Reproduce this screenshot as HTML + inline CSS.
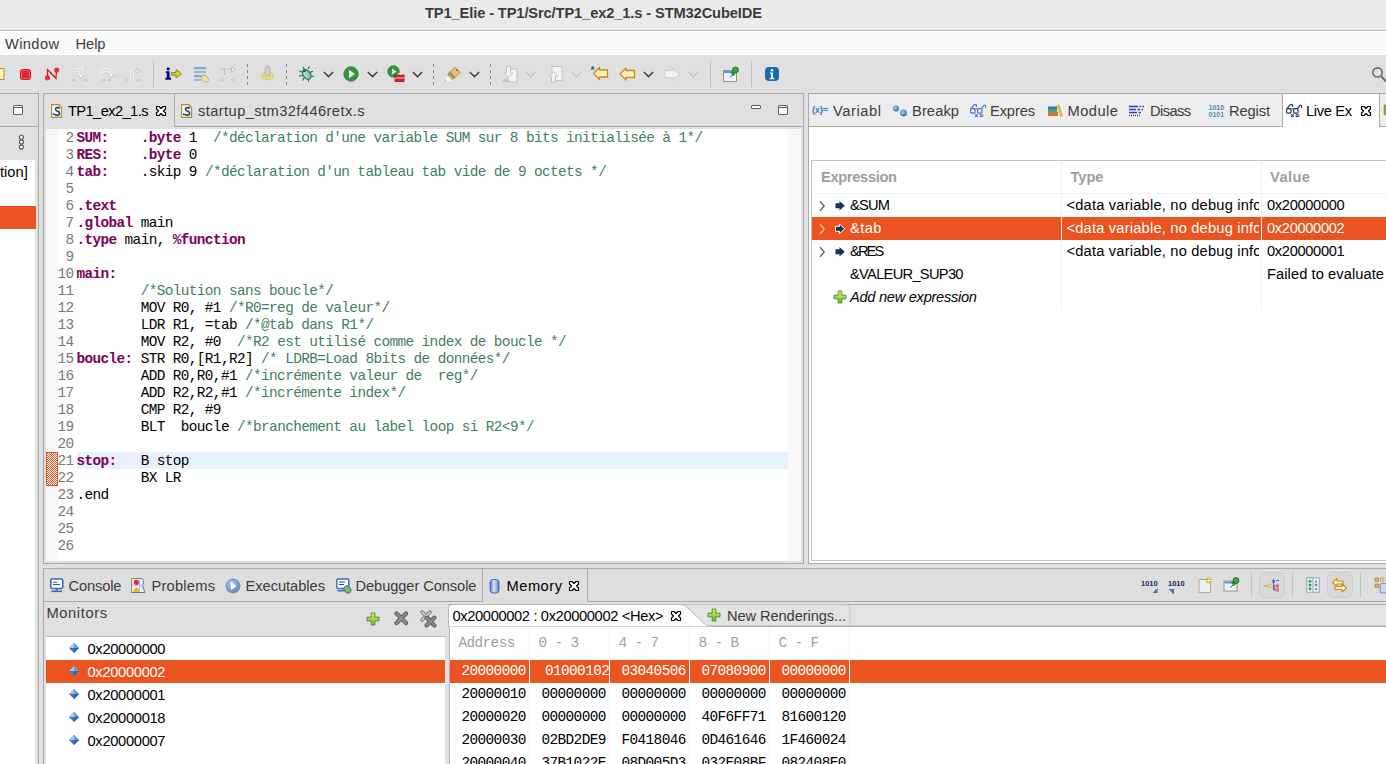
<!DOCTYPE html>
<html><head><meta charset="utf-8"><style>
html,body{margin:0;padding:0;width:1386px;height:764px;overflow:hidden;background:#e0e0e0;position:relative}
div,span,svg{position:absolute;box-sizing:border-box}
.t{white-space:pre}

</style></head><body>
<div style='left:0px;top:0px;width:1386px;height:30px;background:#ebebeb;'></div>
<div style='left:0px;top:30px;width:1386px;height:1px;background:#c2c2c2;'></div>
<div style='left:0px;top:31px;width:1386px;height:1px;background:#ffffff;'></div>
<div style='left:0px;top:32px;width:1386px;height:22px;background:#fafafa;'></div>
<div style='left:0px;top:54px;width:1386px;height:1px;background:#ffffff;'></div>
<div style='left:0px;top:93px;width:39px;height:1px;background:#a9a9a9;'></div>
<div style='left:38px;top:93px;width:1px;height:671px;background:#a9a9a9;'></div>
<div style='left:0px;top:126px;width:38px;height:1px;background:#a9a9a9;'></div>
<div style='left:0px;top:160px;width:35px;height:604px;background:#ffffff;'></div>
<div style='left:0px;top:206px;width:36px;height:23px;background:#e95420;'></div>
<div style='left:43px;top:93px;width:761px;height:471px;border:1px solid #a9a9a9;'></div>
<div style='left:174px;top:94px;width:1px;height:33px;background:#a9a9a9;'></div>
<div style='left:174px;top:126px;width:629px;height:1px;background:#a9a9a9;'></div>
<div style='left:46px;top:129px;width:742px;height:432px;background:#ffffff;'></div>
<div style='left:46px;top:129px;width:12px;height:432px;background:#f8f8f8;'></div>
<div style='left:788px;top:129px;width:13px;height:432px;background:#f8f8f8;'></div>
<div style='left:77px;top:452px;width:711px;height:17px;background:#e8f2fe;'></div>
<div style='left:808px;top:93px;width:600px;height:471px;border:1px solid #a9a9a9;'></div>
<div style='left:809px;top:94px;width:577px;height:32px;background:#ededed;'></div>
<div style='left:809px;top:126px;width:473px;height:1px;background:#a9a9a9;'></div>
<div style='left:1282px;top:94px;width:98px;height:33px;background:#fff;border-left:1px solid #a9a9a9;border-right:1px solid #a9a9a9;'></div>
<div style='left:1380px;top:126px;width:6px;height:1px;background:#a9a9a9;'></div>
<div style='left:809px;top:127px;width:577px;height:436px;background:#ffffff;'></div>
<div style='left:811px;top:160px;width:600px;height:401px;border:1px solid #c4c4c4;'></div>
<div style='left:812px;top:193px;width:574px;height:1px;background:#f2f2f2;'></div>
<div style='left:1061px;top:161px;width:1px;height:148px;background:#f3f3f3;'></div>
<div style='left:1261px;top:161px;width:1px;height:148px;background:#f3f3f3;'></div>
<div style='left:812px;top:217px;width:574px;height:23px;background:#e95420;'></div>
<div style='left:1061px;top:217px;width:1px;height:23px;background:#ffffff;'></div>
<div style='left:1261px;top:217px;width:1px;height:23px;background:#ffffff;'></div>
<div style='left:43px;top:568px;width:1400px;height:300px;border:1px solid #a9a9a9;background:#dedede;'></div>
<div style='left:44px;top:601px;width:438px;height:1px;background:#a9a9a9;'></div>
<div style='left:482px;top:569px;width:1px;height:33px;background:#a9a9a9;'></div>
<div style='left:587px;top:569px;width:1px;height:33px;background:#a9a9a9;'></div>
<div style='left:587px;top:601px;width:799px;height:1px;background:#a9a9a9;'></div>
<div style='left:44px;top:602px;width:1342px;height:162px;background:#e0e0e0;'></div>
<div style='left:46px;top:636px;width:400px;height:1px;background:#b9b9b9;'></div>
<div style='left:46px;top:637px;width:399px;height:127px;background:#ffffff;'></div>
<div style='left:46px;top:660px;width:399px;height:23px;background:#e95420;'></div>
<div style='left:448px;top:604px;width:938px;height:1px;background:#acacac;'></div>
<div style='left:448px;top:605px;width:938px;height:20px;background:#e3e3e3;'></div>
<div style='left:448px;top:625px;width:938px;height:1px;background:#cdcdcd;'></div>
<div style='left:448px;top:626px;width:938px;height:1px;background:#acacac;'></div>
<div style='left:449px;top:627px;width:937px;height:137px;background:#ffffff;'></div>
<div style='left:449px;top:626px;width:1px;height:138px;background:#b9b9b9;'></div>
<div style='left:450px;top:660px;width:936px;height:23px;background:#e95420;'></div>
<div style='left:529px;top:627px;width:1px;height:137px;background:#f4f4f4;'></div>
<div style='left:529px;top:660px;width:1px;height:23px;background:#ffffff;'></div>
<div style='left:609px;top:627px;width:1px;height:137px;background:#f4f4f4;'></div>
<div style='left:609px;top:660px;width:1px;height:23px;background:#ffffff;'></div>
<div style='left:689px;top:627px;width:1px;height:137px;background:#f4f4f4;'></div>
<div style='left:689px;top:660px;width:1px;height:23px;background:#ffffff;'></div>
<div style='left:769px;top:627px;width:1px;height:137px;background:#f4f4f4;'></div>
<div style='left:769px;top:660px;width:1px;height:23px;background:#ffffff;'></div>
<div style='left:849px;top:627px;width:1px;height:137px;background:#f4f4f4;'></div>
<div style='left:849px;top:660px;width:1px;height:23px;background:#ffffff;'></div>
<div style='left:153px;top:61px;width:1px;height:26px;background:#bdbdbd;'></div>
<div style='left:247px;top:64px;width:1px;height:2.5px;background:#8f8a74;'></div>
<div style='left:247px;top:70px;width:1px;height:2.5px;background:#8f8a74;'></div>
<div style='left:247px;top:76px;width:1px;height:2.5px;background:#8f8a74;'></div>
<div style='left:247px;top:82px;width:1px;height:2.5px;background:#8f8a74;'></div>
<div style='left:286px;top:64px;width:1px;height:2.5px;background:#8f8a74;'></div>
<div style='left:286px;top:70px;width:1px;height:2.5px;background:#8f8a74;'></div>
<div style='left:286px;top:76px;width:1px;height:2.5px;background:#8f8a74;'></div>
<div style='left:286px;top:82px;width:1px;height:2.5px;background:#8f8a74;'></div>
<div style='left:433px;top:64px;width:1px;height:2.5px;background:#8f8a74;'></div>
<div style='left:433px;top:70px;width:1px;height:2.5px;background:#8f8a74;'></div>
<div style='left:433px;top:76px;width:1px;height:2.5px;background:#8f8a74;'></div>
<div style='left:433px;top:82px;width:1px;height:2.5px;background:#8f8a74;'></div>
<div style='left:490px;top:64px;width:1px;height:2.5px;background:#8f8a74;'></div>
<div style='left:490px;top:70px;width:1px;height:2.5px;background:#8f8a74;'></div>
<div style='left:490px;top:76px;width:1px;height:2.5px;background:#8f8a74;'></div>
<div style='left:490px;top:82px;width:1px;height:2.5px;background:#8f8a74;'></div>
<div style='left:710px;top:61px;width:1px;height:26px;background:#bdbdbd;'></div>
<div style='left:751px;top:61px;width:1px;height:26px;background:#bdbdbd;'></div>
<div style='left:751px;top:105px;width:10px;height:4px;border:1px solid #5e5e5e;background:#fff;border-radius:1px;'></div>
<div style='left:778px;top:105px;width:10px;height:10px;border:1px solid #5e5e5e;background:#fff;border-radius:1px;'></div>
<div style='left:779px;top:107px;width:8px;height:1px;background:#5e5e5e;'></div>
<div style='left:13px;top:105px;width:10px;height:10px;border:1px solid #5e5e5e;background:#fff;border-radius:1px;'></div>
<div style='left:14px;top:107px;width:8px;height:1px;background:#5e5e5e;'></div>
<div style='left:1251px;top:572px;width:1px;height:26px;background:#c4c4c4;'></div>
<div style='left:1259px;top:572px;width:26px;height:26px;border:1px solid #cdcdcd;border-radius:6px;background:#d9d9d9;'></div>
<div style='left:1292px;top:572px;width:1px;height:26px;background:#c4c4c4;'></div>
<div style='left:1327px;top:572px;width:26px;height:26px;border:1px solid #cdcdcd;border-radius:6px;background:#d9d9d9;'></div>
<div style='left:1360px;top:572px;width:1px;height:26px;background:#c4c4c4;'></div>
<svg style='left:680px;top:603px' width='175' height='24' viewBox='0 0 175 24'><path d='M2 1.5 H165 Q170 1.5 170 6 V23' fill='none' stroke='#c4c4c4' stroke-width='1'/><path d='M25 23 Q21 23 18 20 L6 7' fill='none' stroke='#c4c4c4'/></svg>
<svg style='left:447px;top:603px' width='270' height='24' viewBox='0 0 270 24'><path d='M1.5 23.5 V6 Q1.5 1.5 6 1.5 H233 Q238 1.5 241 5 L257 20.5 Q260 23.5 266 23.5' fill='#fff' stroke='#b9b9b9' stroke-width='1'/></svg>
<svg style='left:46px;top:452px' width='12' height='34' viewBox='0 0 12 34'><defs><pattern id='hatch' x='0' y='0' width='2' height='2' patternUnits='userSpaceOnUse'><rect width='2' height='2' fill='#e95420'/><rect x='1' y='0' width='1' height='1' fill='#fff'/><rect x='0' y='1' width='1' height='1' fill='#fff'/></pattern></defs><rect x='0' y='0' width='12' height='34' fill='url(#hatch)'/><rect x='0.5' y='0.5' width='11' height='33' fill='none' stroke='#e95420'/></svg>
<svg style='left:0px;top:68px' width='5' height='13' viewBox='0 0 5 13'><rect x='-6' y='0.5' width='10' height='11' fill='#fff0b8' stroke='#b89030'/></svg>
<svg style='left:19px;top:68px' width='13' height='13' viewBox='0 0 13 13'><rect x='1.5' y='1.5' width='10' height='10' rx='2' fill='#e5232f' stroke='#c81c28'/><rect x='2.5' y='2.5' width='8' height='8' rx='1' fill='none' stroke='#f07078' stroke-width='0.8'/></svg>
<svg style='left:44px;top:67px' width='16' height='15' viewBox='0 0 16 15'><path d='M3.5 10 L3.5 2.5 L8 7 M9 8 L12 11.5 L12.5 3.5' fill='none' stroke='#d8202c' stroke-width='1.3'/><path d='M6.5 6.5 L8.5 7.5 M8.5 8.5 L10 9' stroke='#801018' stroke-width='1.2'/><circle cx='3.5' cy='10.8' r='2.6' fill='#e63040'/><circle cx='12.7' cy='3' r='2.6' fill='#e63040'/></svg>
<svg style='left:71px;top:68px' width='17' height='13' viewBox='0 0 17 13'><path d='M3 2 H10 V8' fill='none' stroke='#f8f8f8' stroke-width='3'/><path d='M3 2 H10 V8' fill='none' stroke='#c2c2c2' stroke-width='1'/><path d='M7 7 L10 11 L13 7' fill='#f8f8f8' stroke='#c2c2c2'/><path d='M1 12 H4 M13 12 H16' stroke='#c2c2c2' stroke-width='1.5'/></svg>
<svg style='left:98px;top:68px' width='17' height='13' viewBox='0 0 17 13'><path d='M2 7 Q2 2 7.5 2 Q13 2 13 6' fill='none' stroke='#f8f8f8' stroke-width='3'/><path d='M2 7 Q2 2 7.5 2 Q13 2 13 6' fill='none' stroke='#c2c2c2'/><path d='M10 6 L13 10 L16 6' fill='#f8f8f8' stroke='#c2c2c2'/><path d='M4 12 H7 M10 12 H13' stroke='#c2c2c2' stroke-width='1.5'/></svg>
<svg style='left:125px;top:68px' width='17' height='13' viewBox='0 0 17 13'><path d='M7 12 V5 Q7 3 10 3 H12' fill='none' stroke='#f8f8f8' stroke-width='3'/><path d='M7 12 V5 Q7 3 10 3 H12' fill='none' stroke='#c2c2c2'/><path d='M11 0.5 L15 3 L11 5.5 Z' fill='#f8f8f8' stroke='#c2c2c2'/><path d='M1 12 H3 M12 12 H15' stroke='#c2c2c2' stroke-width='1.5'/></svg>
<svg style='left:165px;top:67px' width='18' height='14' viewBox='0 0 18 14'><circle cx='3.2' cy='1.8' r='1.6' fill='#000080'/><path d='M0.8 4.2 H4.6 V10.8 H6 V12.8 H0.3 V10.8 H1.8 V6 H0.8 Z' fill='#000080'/><path d='M6.5 5.5 H11 V2.5 L16.5 6.8 L11 11 V8.2 H6.5 Z' fill='#d8d820' stroke='#7a6a10' stroke-width='0.8'/></svg>
<svg style='left:193px;top:66px' width='18' height='17' viewBox='0 0 18 17'><rect x='1' y='1' width='12' height='2.2' fill='#7fa8d0'/><rect x='1' y='5' width='12' height='2.2' fill='#9ab8d8'/><rect x='1' y='9' width='12' height='2.2' fill='#7fa8d0'/><rect x='1' y='13' width='7' height='2' fill='#9ab8d8'/><path d='M8 11 Q10 8 13 10 L15 12 Q17 14 14 16 Q11 17 9 14 Z' fill='#f4dcae' stroke='#c8a060' stroke-width='0.8'/></svg>
<svg style='left:219px;top:67px' width='18' height='15' viewBox='0 0 18 15'><path d='M1 2 H10 M5.5 2 V9' fill='none' stroke='#c2c2c2' stroke-width='1.2'/><path d='M10 2 H13' stroke='#c2c2c2'/><path d='M12.5 0 L16 2.5 L12.5 5 Z' fill='#f8f8f8' stroke='#c2c2c2'/><path d='M3 9 L5.5 12 L8 9' fill='#f8f8f8' stroke='#c2c2c2'/><path d='M1 13 H4 M12 13 H15' stroke='#c2c2c2' stroke-width='1.5'/></svg>
<svg style='left:259px;top:65px' width='17' height='18' viewBox='0 0 17 18'><path d='M3 11 Q1.5 9 3.5 8 L6 7.5 Q8 6 11 7.5 L13.5 8 Q15.5 9 14 11 Q15 13.5 12 14 Q9 16 5.5 14 Q2 13.5 3 11Z' fill='#ecd878' stroke='#d8c060' stroke-width='0.6'/><rect x='6' y='1' width='5' height='10' rx='2.5' fill='#cfcfcf' stroke='#a8a8a8' stroke-width='0.8'/></svg>
<svg style='left:298px;top:65px' width='18' height='18' viewBox='0 0 18 18'><defs><linearGradient id='bug' x1='0' y1='0' x2='1' y2='1'><stop offset='0' stop-color='#d8f0d0'/><stop offset='1' stop-color='#68b878'/></linearGradient></defs><path d='M1.5 6 L5 7.5 M1 11 L5 10.5 M4.5 15.5 L6.5 12.5 M10.5 16.5 L10.5 13.5 M16 11.5 L12.5 11 M15 6 L12 7.5 M5 2 L6.5 4.5 M11.5 1.5 L10 4' fill='none' stroke='#1a6a6a' stroke-width='1.2'/><ellipse cx='8.8' cy='9.5' rx='3.6' ry='5.2' transform='rotate(-35 8.8 9.5)' fill='url(#bug)' stroke='#1a6a6a' stroke-width='1.1'/><circle cx='6.5' cy='5.5' r='1.8' fill='#1a6a6a'/></svg>
<svg style='left:323px;top:71px' width='11' height='7' viewBox='0 0 11 7'><path d='M0.8 1 L5.5 5.6 L10.2 1' fill='none' stroke='#404040' stroke-width='1.5'/></svg>
<svg style='left:343px;top:66px' width='16' height='16' viewBox='0 0 16 16'><circle cx='8' cy='8' r='7.2' fill='#2f9a3a' stroke='#1f7a2a' stroke-width='0.8'/><path d='M6 4 L12 8 L6 12 Z' fill='#fff'/></svg>
<svg style='left:367px;top:71px' width='11' height='7' viewBox='0 0 11 7'><path d='M0.8 1 L5.5 5.6 L10.2 1' fill='none' stroke='#404040' stroke-width='1.5'/></svg>
<svg style='left:387px;top:65px' width='18' height='18' viewBox='0 0 18 18'><circle cx='6.5' cy='6.5' r='5.7' fill='#2f9a3a' stroke='#1f7a2a' stroke-width='0.8'/><path d='M5 3.5 L9.5 6.5 L5 9.5 Z' fill='#fff'/><rect x='8' y='10' width='9' height='6.5' fill='#e02020' stroke='#a01010' stroke-width='0.8'/><path d='M11 10 V8.8 H14 V10 M8 13 H17' stroke='#fff' fill='none' stroke-width='0.8'/></svg>
<svg style='left:412px;top:71px' width='11' height='7' viewBox='0 0 11 7'><path d='M0.8 1 L5.5 5.6 L10.2 1' fill='none' stroke='#404040' stroke-width='1.5'/></svg>
<svg style='left:444px;top:66px' width='18' height='16' viewBox='0 0 18 16'><path d='M1.5 14.5 L5 7 L11 1.5 L16.5 6.5 L10 12.5 Z' fill='#f0c060' stroke='#c08020' stroke-width='0.8'/><path d='M3 9.5 L8 14.5 L4.5 15 Q1 15.5 1.5 12 Z' fill='#fffbe0'/><path d='M5 6.5 L10.5 12' stroke='#909090' stroke-width='3'/><circle cx='13' cy='4' r='1' fill='#4a6aa8'/></svg>
<svg style='left:469px;top:71px' width='11' height='7' viewBox='0 0 11 7'><path d='M0.8 1 L5.5 5.6 L10.2 1' fill='none' stroke='#404040' stroke-width='1.5'/></svg>
<svg style='left:502px;top:66px' width='16' height='17' viewBox='0 0 16 17'><rect x='6' y='3' width='9' height='13' fill='#f4f4f4' stroke='#c2c2c2'/><path d='M4.5 0.5 H8.5 V7 H11 L6.5 11.5 L2 7 H4.5 Z' fill='#f4f4f4' stroke='#c2c2c2'/><rect x='1' y='13' width='6' height='3' fill='#c2c2c2'/></svg>
<svg style='left:525px;top:71px' width='11' height='7' viewBox='0 0 11 7'><path d='M0.8 1 L5.5 5.6 L10.2 1' fill='none' stroke='#c8c8c8' stroke-width='1.5'/></svg>
<svg style='left:547px;top:66px' width='16' height='17' viewBox='0 0 16 17'><rect x='5' y='0.5' width='10' height='14' fill='#f4f4f4' stroke='#c2c2c2'/><path d='M4.5 16 V10 H2 L6.5 5.5 L11 10 H8.5 V16 Z' fill='#f4f4f4' stroke='#c2c2c2'/></svg>
<svg style='left:571px;top:71px' width='11' height='7' viewBox='0 0 11 7'><path d='M0.8 1 L5.5 5.6 L10.2 1' fill='none' stroke='#c8c8c8' stroke-width='1.5'/></svg>
<svg style='left:591px;top:66px' width='18' height='15' viewBox='0 0 18 15'><path d='M8.5 4 V1.5 L2.5 7.5 L8.5 13.5 V11 H16.5 V4 Z' fill='#fff0c0' stroke='#c88a10' stroke-width='1.3' stroke-linejoin='round'/><text x='-0.5' y='8' font-family='Liberation Sans' font-weight='700' font-size='10' fill='#2a5a9a'>*</text></svg>
<svg style='left:619px;top:67px' width='17' height='14' viewBox='0 0 17 14'><path d='M7 3.5 V1 L1 7 L7 13 V10.5 H15.5 V3.5 Z' fill='#fff0c0' stroke='#c88a10' stroke-width='1.3' stroke-linejoin='round'/></svg>
<svg style='left:643px;top:71px' width='11' height='7' viewBox='0 0 11 7'><path d='M0.8 1 L5.5 5.6 L10.2 1' fill='none' stroke='#404040' stroke-width='1.5'/></svg>
<svg style='left:664px;top:67px' width='17' height='14' viewBox='0 0 17 14'><path d='M9 3.5 V1 L15.5 7 L9 13 V10.5 H0.8 V3.5 Z' fill='#f4f4f4' stroke='#d0d0d0' stroke-width='1.1' stroke-linejoin='round'/></svg>
<svg style='left:688px;top:71px' width='11' height='7' viewBox='0 0 11 7'><path d='M0.8 1 L5.5 5.6 L10.2 1' fill='none' stroke='#c8c8c8' stroke-width='1.5'/></svg>
<svg style='left:722px;top:66px' width='18' height='17' viewBox='0 0 18 17'><rect x='1.5' y='4.5' width='13' height='11' fill='#eaf4fc' stroke='#a09070'/><rect x='2' y='5' width='12' height='2' fill='#5a9ad8'/><path d='M8 11.5 L11 8.5' stroke='#404040' stroke-width='1'/><path d='M9.5 6 L12.5 9' stroke='#2a8a30' stroke-width='2.5'/><circle cx='13.5' cy='4' r='3' fill='#3aa040' stroke='#1f6f25' stroke-width='0.8'/></svg>
<svg style='left:764px;top:66px' width='16' height='16' viewBox='0 0 16 16'><rect x='1' y='1' width='14' height='14' rx='4' fill='#1a6ab0'/><circle cx='8' cy='4.2' r='1.3' fill='#fff'/><path d='M6 6.5 H9 V12 H10.3 V13.2 H5.7 V12 H7 V7.7 H6 Z' fill='#fff'/></svg>
<svg style='left:1370px;top:65px' width='16' height='19' viewBox='0 0 16 19'><circle cx='7.5' cy='7.4' r='4.6' fill='none' stroke='#6e6e6e' stroke-width='1.7'/><path d='M11 11 L16 16.5' stroke='#6e6e6e' stroke-width='1.9'/></svg>
<svg style='left:51px;top:104px' width='13' height='16' viewBox='0 0 13 16'><defs><linearGradient id='sf' x1='0' y1='0' x2='1' y2='1'><stop offset='0' stop-color='#ffffff'/><stop offset='1' stop-color='#dce8f4'/></linearGradient></defs><path d='M0.6 0.6 H8 L10.6 3.2 V13.4 H0.6 Z' fill='url(#sf)' stroke='#b08a2a' stroke-width='1.1'/><path d='M8 0.6 V3.2 H10.6' fill='#e8c060' stroke='#b08a2a' stroke-width='0.6'/><rect x='2' y='9.5' width='1.6' height='1.6' fill='#1a3a6a'/><path d='M8.6 4.6 Q7.8 3.4 6.4 3.5 Q4.4 3.7 4.6 5.5 Q4.8 6.8 6.6 7.2 Q8.6 7.7 8.6 9.3 Q8.5 11.3 6.3 11.3 Q4.8 11.3 4 10.2' fill='none' stroke='#1a3a6a' stroke-width='1.5'/></svg>
<svg style='left:181px;top:104px' width='13' height='16' viewBox='0 0 13 16'><defs><linearGradient id='sf' x1='0' y1='0' x2='1' y2='1'><stop offset='0' stop-color='#ffffff'/><stop offset='1' stop-color='#dce8f4'/></linearGradient></defs><path d='M0.6 0.6 H8 L10.6 3.2 V13.4 H0.6 Z' fill='url(#sf)' stroke='#b08a2a' stroke-width='1.1'/><path d='M8 0.6 V3.2 H10.6' fill='#e8c060' stroke='#b08a2a' stroke-width='0.6'/><rect x='2' y='9.5' width='1.6' height='1.6' fill='#1a3a6a'/><path d='M8.6 4.6 Q7.8 3.4 6.4 3.5 Q4.4 3.7 4.6 5.5 Q4.8 6.8 6.6 7.2 Q8.6 7.7 8.6 9.3 Q8.5 11.3 6.3 11.3 Q4.8 11.3 4 10.2' fill='none' stroke='#1a3a6a' stroke-width='1.5'/></svg>
<svg style='left:155px;top:105px' width='12' height='12' viewBox='0 0 12 12'><path d='M1.5 1.5 H4 L6 3.5 L8 1.5 H10.5 V4 L8.5 6 L10.5 8 V10.5 H8 L6 8.5 L4 10.5 H1.5 V8 L3.5 6 L1.5 4 Z' fill='#fff' stroke='#000' stroke-width='1.15' stroke-linejoin='round'/></svg>
<svg style='left:1360px;top:105px' width='12' height='12' viewBox='0 0 12 12'><path d='M1.5 1.5 H4 L6 3.5 L8 1.5 H10.5 V4 L8.5 6 L10.5 8 V10.5 H8 L6 8.5 L4 10.5 H1.5 V8 L3.5 6 L1.5 4 Z' fill='#fff' stroke='#000' stroke-width='1.15' stroke-linejoin='round'/></svg>
<svg style='left:568px;top:580px' width='12' height='12' viewBox='0 0 12 12'><path d='M1.5 1.5 H4 L6 3.5 L8 1.5 H10.5 V4 L8.5 6 L10.5 8 V10.5 H8 L6 8.5 L4 10.5 H1.5 V8 L3.5 6 L1.5 4 Z' fill='#fff' stroke='#000' stroke-width='1.15' stroke-linejoin='round'/></svg>
<svg style='left:670px;top:609.5px' width='12' height='12' viewBox='0 0 12 12'><path d='M1.5 1.5 H4 L6 3.5 L8 1.5 H10.5 V4 L8.5 6 L10.5 8 V10.5 H8 L6 8.5 L4 10.5 H1.5 V8 L3.5 6 L1.5 4 Z' fill='#fff' stroke='#000' stroke-width='1.15' stroke-linejoin='round'/></svg>
<svg style='left:17px;top:133px' width='9' height='18' viewBox='0 0 9 18'><circle cx='4.4' cy='4.2' r='2' fill='#fff' stroke='#505050' stroke-width='1.1'/><circle cx='4.4' cy='9.1' r='2' fill='#fff' stroke='#505050' stroke-width='1.1'/><circle cx='4.4' cy='14.1' r='2' fill='#fff' stroke='#505050' stroke-width='1.1'/></svg>
<svg style='left:811px;top:103px' width='20' height='13' viewBox='0 0 20 13'><text x='1' y='10' font-family='Liberation Sans' font-size='9.5' font-weight='700' fill='#3a80c8' letter-spacing='-0.4'>(x)=</text></svg>
<svg style='left:891px;top:104px' width='17' height='13' viewBox='0 0 17 13'><defs><radialGradient id='bp' cx='0.35' cy='0.35' r='0.7'><stop offset='0' stop-color='#a8d0f0'/><stop offset='1' stop-color='#2a78c0'/></radialGradient></defs><circle cx='5' cy='4.5' r='2.8' fill='url(#bp)' stroke='#3a78b8' stroke-width='0.5'/><circle cx='12.5' cy='9' r='3.2' fill='url(#bp)' stroke='#3a78b8' stroke-width='0.5'/></svg>
<svg style='left:968px;top:101px' width='20' height='20' viewBox='0 0 20 20'><g fill='none' stroke='#3a80c8' stroke-width='1.2' stroke-linecap='round'><rect x='2.6' y='7.6' width='4.4' height='4.6' rx='1.3'/><rect x='9.6' y='7.6' width='4.4' height='4.6' rx='1.3'/><path d='M7 8 H9.6 M3 7.6 L6.2 3.8 Q7.6 3 8.4 4.2 V5.6 M13.6 7.6 L15.6 4.6 Q16.6 3.8 17.6 4.8 V6.6'/><path d='M7.5 13.6 L9.3 15.6 M9.3 13.6 L7.5 15.6 M12.2 13.9 H14.8 M12.2 15.5 H14.8'/></g></svg>
<svg style='left:1284px;top:101px' width='20' height='20' viewBox='0 0 20 20'><g fill='none' stroke='#1c3c6c' stroke-width='1.2' stroke-linecap='round'><rect x='2.6' y='7.6' width='4.4' height='4.6' rx='1.3'/><rect x='9.6' y='7.6' width='4.4' height='4.6' rx='1.3'/><path d='M7 8 H9.6 M3 7.6 L6.2 3.8 Q7.6 3 8.4 4.2 V5.6 M13.6 7.6 L15.6 4.6 Q16.6 3.8 17.6 4.8 V6.6'/><path d='M7.5 13.6 L9.3 15.6 M9.3 13.6 L7.5 15.6 M12.2 13.9 H14.8 M12.2 15.5 H14.8'/></g></svg>
<svg style='left:1047px;top:104px' width='16' height='14' viewBox='0 0 16 14'><rect x='1' y='2.5' width='9' height='2.5' fill='#2a78c0'/><rect x='1' y='5' width='9' height='3' fill='#48a868'/><rect x='1' y='8' width='10' height='4' fill='#c87838'/><path d='M10 1.5 L12 1 L15.5 12 L13.5 12.5 Z' fill='#f0c040' stroke='#c89020' stroke-width='0.5'/></svg>
<svg style='left:1128px;top:105px' width='18' height='13' viewBox='0 0 18 13'><g stroke='#2a40b8' stroke-width='1.4'><path d='M1 1.5 H10 M11.5 1.5 H13 M14.5 1.5 H16 M1 4.5 H8 M9.5 4.5 H12 M13.5 4.5 H15 M1 7.5 H9 M10.5 7.5 H13'/><path d='M1 10.5 H12' stroke-dasharray='1 1'/></g></svg>
<svg style='left:1208px;top:104px' width='17' height='14' viewBox='0 0 17 14'><text x='0.5' y='6.2' font-family='Liberation Sans' font-size='7' font-weight='700' fill='#3a90d0'>1010</text><text x='0.5' y='12.8' font-family='Liberation Sans' font-size='7' font-weight='700' fill='#3a90d0'>0101</text></svg>
<svg style='left:1383px;top:104px' width='6' height='13' viewBox='0 0 6 13'><path d='M1 1 H8 V10 L4 12 L1 10 Z' fill='#60b060' stroke='#c89020' stroke-width='0.8'/></svg>
<svg style='left:819px;top:199.5px' width='7' height='12' viewBox='0 0 7 12'><path d='M1 1.2 L5.2 6 L1 10.8' fill='none' stroke='#505050' stroke-width='1.2'/></svg>
<svg style='left:834.5px;top:200.5px' width='11' height='11' viewBox='0 0 11 11'><path d='M0.5 2.3 H4.5 V0 L9.7 4.8 L4.5 9.6 V7.3 H0.5 Z' fill='#14305e'/></svg>
<svg style='left:819px;top:222.5px' width='7' height='12' viewBox='0 0 7 12'><path d='M1 1.2 L5.2 6 L1 10.8' fill='none' stroke='#f5c2ad' stroke-width='1.2'/></svg>
<svg style='left:834.5px;top:223.5px' width='11' height='11' viewBox='0 0 11 11'><path d='M0.5 2.3 H4.5 V0 L9.7 4.8 L4.5 9.6 V7.3 H0.5 Z' fill='#14305e' stroke='#fff' stroke-width='1'/></svg>
<svg style='left:819px;top:245.5px' width='7' height='12' viewBox='0 0 7 12'><path d='M1 1.2 L5.2 6 L1 10.8' fill='none' stroke='#505050' stroke-width='1.2'/></svg>
<svg style='left:834.5px;top:246.5px' width='11' height='11' viewBox='0 0 11 11'><path d='M0.5 2.3 H4.5 V0 L9.7 4.8 L4.5 9.6 V7.3 H0.5 Z' fill='#14305e'/></svg>
<svg style='left:833px;top:289.5px' width='14' height='14' viewBox='0 0 14 14'><defs><linearGradient id='gp4' x1='0' y1='0' x2='0' y2='1'><stop offset='0' stop-color='#e8f050'/><stop offset='1' stop-color='#68b830'/></linearGradient></defs><path d='M5.2 1 H8.8 V5.2 H13 V8.8 H8.8 V13 H5.2 V8.8 H1 V5.2 H5.2 Z' fill='url(#gp4)' stroke='#3a8a3a' stroke-width='0.9'/></svg>
<svg style='left:50px;top:578px' width='14' height='15' viewBox='0 0 14 15'><rect x='0.8' y='1' width='12' height='9.5' rx='1.5' fill='#fff' stroke='#3a6ab8' stroke-width='1.6'/><path d='M3 4.2 H7 M3 6.6 H10' stroke='#2a4a98' stroke-width='1'/><rect x='1.5' y='12.5' width='10.5' height='1.6' fill='#3a6ab8'/><rect x='5.5' y='10.5' width='2.5' height='2' fill='#3a6ab8'/></svg>
<svg style='left:130px;top:577px' width='17' height='17' viewBox='0 0 17 17'><path d='M1.5 1.5 H12 Q14.5 3 13.5 6 Q12 8 13 10 Q14 13 15 15.5 H1.5 Z' fill='#e4f2fc' stroke='#5a6a98' stroke-width='0.9'/><path d='M1.5 15.5 V1.5 H10' fill='none' stroke='#a09040' stroke-width='0.9'/><path d='M2 8.3 H13 M9.5 2 V15' stroke='#a8b8e0' stroke-width='0.9'/><circle cx='6.3' cy='5.3' r='2.6' fill='#e8283a'/><path d='M3.5 15 Q3.5 10.5 6.3 10.5 Q9 10.5 9 15 Z' fill='#f8b020'/></svg>
<svg style='left:225px;top:578px' width='16' height='16' viewBox='0 0 16 16'><defs><radialGradient id='ex' cx='0.4' cy='0.35' r='0.7'><stop offset='0' stop-color='#b8cdf0'/><stop offset='1' stop-color='#5a7cc0'/></radialGradient></defs><circle cx='8' cy='8' r='7' fill='url(#ex)' stroke='#6a88c0' stroke-width='0.8'/><path d='M6 4 L11.5 8 L6 12 Z' fill='#fff'/></svg>
<svg style='left:336px;top:578px' width='17' height='17' viewBox='0 0 17 17'><rect x='0.8' y='1' width='12' height='9.5' rx='1.2' fill='#fff' stroke='#3a6ab8' stroke-width='1.4'/><path d='M3 4 H9 M3 6.5 H8' stroke='#2a4a98' stroke-width='1'/><rect x='1.5' y='12' width='7' height='1.5' fill='#3a6ab8'/><ellipse cx='11.5' cy='11.5' rx='3.2' ry='4' transform='rotate(-40 11.5 11.5)' fill='#78b878' stroke='#2a6a5a' stroke-width='0.8'/></svg>
<svg style='left:489px;top:578px' width='12' height='17' viewBox='0 0 12 17'><defs><linearGradient id='mm' x1='0' y1='0' x2='1' y2='0'><stop offset='0' stop-color='#4a7ad0'/><stop offset='0.45' stop-color='#d8e6f8'/><stop offset='1' stop-color='#4a7ad0'/></linearGradient></defs><rect x='1' y='1.5' width='9' height='13.5' rx='3' fill='url(#mm)' stroke='#3a68b8' stroke-width='0.9'/></svg>
<svg style='left:366px;top:612px' width='15' height='15' viewBox='0 0 15 15'><defs><linearGradient id='gp2' x1='0' y1='0' x2='0' y2='1'><stop offset='0' stop-color='#e8f050'/><stop offset='1' stop-color='#68b830'/></linearGradient></defs><path d='M5.2 1 H8.8 V5.2 H13 V8.8 H8.8 V13 H5.2 V8.8 H1 V5.2 H5.2 Z' fill='url(#gp2)' stroke='#3a8a3a' stroke-width='0.9'/></svg>
<svg style='left:394px;top:611px' width='15' height='16' viewBox='0 0 15 16'><path d='M2.5 2.5 L12 12 M12 2.5 L2.5 12' stroke='#5a5a5a' stroke-width='4.2' stroke-linecap='round'/><path d='M2.5 2.5 L12 12 M12 2.5 L2.5 12' stroke='#8e8e8e' stroke-width='2.4' stroke-linecap='round'/></svg>
<svg style='left:420px;top:610px' width='18' height='18' viewBox='0 0 18 18'><path d='M2 2 L10 10 M10 2 L2 10' stroke='#6a6a6a' stroke-width='3.2' stroke-linecap='round'/><path d='M2 2 L10 10 M10 2 L2 10' stroke='#e0e0e0' stroke-width='1.6' stroke-linecap='round'/><path d='M6.5 7.5 L14.5 15.5 M14.5 7.5 L6.5 15.5' stroke='#5a5a5a' stroke-width='4' stroke-linecap='round'/><path d='M6.5 7.5 L14.5 15.5 M14.5 7.5 L6.5 15.5' stroke='#8e8e8e' stroke-width='2.2' stroke-linecap='round'/></svg>
<svg style='left:68px;top:642px' width='12' height='12' viewBox='0 0 12 12'><path d='M6 1 L11 6 L6 11 L1 6 Z' fill='#3a78b8'/><path d='M6 1 L1 6 L6 6 Z' fill='#a8cce8'/><path d='M6 1 L11 6 L6 6 Z' fill='#6aa0d0'/><path d='M6 11 L11 6 L6 6 Z' fill='#2a64a8'/></svg>
<svg style='left:68px;top:665px' width='12' height='12' viewBox='0 0 12 12'><path d='M6 1 L11 6 L6 11 L1 6 Z' fill='#3a78b8'/><path d='M6 1 L1 6 L6 6 Z' fill='#a8cce8'/><path d='M6 1 L11 6 L6 6 Z' fill='#6aa0d0'/><path d='M6 11 L11 6 L6 6 Z' fill='#2a64a8'/></svg>
<svg style='left:68px;top:688px' width='12' height='12' viewBox='0 0 12 12'><path d='M6 1 L11 6 L6 11 L1 6 Z' fill='#3a78b8'/><path d='M6 1 L1 6 L6 6 Z' fill='#a8cce8'/><path d='M6 1 L11 6 L6 6 Z' fill='#6aa0d0'/><path d='M6 11 L11 6 L6 6 Z' fill='#2a64a8'/></svg>
<svg style='left:68px;top:711px' width='12' height='12' viewBox='0 0 12 12'><path d='M6 1 L11 6 L6 11 L1 6 Z' fill='#3a78b8'/><path d='M6 1 L1 6 L6 6 Z' fill='#a8cce8'/><path d='M6 1 L11 6 L6 6 Z' fill='#6aa0d0'/><path d='M6 11 L11 6 L6 6 Z' fill='#2a64a8'/></svg>
<svg style='left:68px;top:734px' width='12' height='12' viewBox='0 0 12 12'><path d='M6 1 L11 6 L6 11 L1 6 Z' fill='#3a78b8'/><path d='M6 1 L1 6 L6 6 Z' fill='#a8cce8'/><path d='M6 1 L11 6 L6 6 Z' fill='#6aa0d0'/><path d='M6 11 L11 6 L6 6 Z' fill='#2a64a8'/></svg>
<svg style='left:707px;top:608px' width='15' height='15' viewBox='0 0 15 15'><defs><linearGradient id='gp3' x1='0' y1='0' x2='0' y2='1'><stop offset='0' stop-color='#e8f050'/><stop offset='1' stop-color='#68b830'/></linearGradient></defs><path d='M5.2 1 H8.8 V5.2 H13 V8.8 H8.8 V13 H5.2 V8.8 H1 V5.2 H5.2 Z' fill='url(#gp3)' stroke='#3a8a3a' stroke-width='0.9'/></svg>
<svg style='left:1141px;top:579px' width='18' height='16' viewBox='0 0 18 16'><text x='0' y='6.5' font-family='Liberation Sans' font-size='7.5' font-weight='700' fill='#1a2a5a'>1010</text><path d='M16.5 9 V14 H11.5 Z' fill='#3a78b8'/></svg>
<svg style='left:1167px;top:579px' width='18' height='16' viewBox='0 0 18 16'><text x='1' y='6.5' font-family='Liberation Sans' font-size='7.5' font-weight='700' fill='#1a2a5a'>1010</text><path d='M1.5 10 H7 V15.5 Z' fill='#3a78b8'/></svg>
<svg style='left:1198px;top:576px' width='16' height='18' viewBox='0 0 16 18'><path d='M1 3.5 H9.5 L12.5 6.5 V16.5 H1 Z' fill='#eaf0fa' stroke='#b8a880' stroke-width='1'/><path d='M7.5 4.5 H14 M10.75 1.5 V7.5' stroke='#c8a030' stroke-width='2.6'/><path d='M7.5 4.5 H14 M10.75 1.5 V7.5' stroke='#fff4b0' stroke-width='1'/></svg>
<svg style='left:1223px;top:576px' width='18' height='17' viewBox='0 0 18 17'><rect x='1' y='5' width='13' height='10' fill='#eaf4fc' stroke='#8a8a80' stroke-width='0.9'/><rect x='1.5' y='5.5' width='12' height='2' fill='#5a9ad8'/><path d='M7.5 11.5 L10.5 8.5' stroke='#404040' stroke-width='1'/><path d='M9 6 L12 9' stroke='#2a8a30' stroke-width='2.5'/><circle cx='13' cy='4.5' r='3' fill='#3aa040' stroke='#1f6f25' stroke-width='0.8'/></svg>
<svg style='left:1263px;top:578px' width='18' height='15' viewBox='0 0 18 15'><path d='M1 7.5 H6 V5.5 L9.5 8 L6 10.5 V8.5 H1 Z' fill='#f8e8a0' stroke='#c8a040' stroke-width='0.6'/><path d='M10.5 2.5 V12 H12 M10.5 7.5 H12 M9 4 L10.5 1.5 L12 4 Z' fill='#4a70c0' stroke='#4a70c0' stroke-width='1'/><rect x='12.5' y='6.5' width='3.5' height='3' fill='#f06080'/><rect x='12.5' y='10.5' width='3.5' height='3' fill='#f06080'/><path d='M13 2.5 H16' stroke='#4a70c0'/></svg>
<svg style='left:1306px;top:577px' width='15' height='17' viewBox='0 0 15 17'><rect x='0.8' y='0.8' width='12.4' height='14.4' fill='#eaf6fb' stroke='#8a98b0' stroke-width='0.9'/><path d='M7 1 V15' stroke='#8a98b0' stroke-width='0.9'/><circle cx='4' cy='4.2' r='1.5' fill='#3a9a50'/><circle cx='4' cy='8' r='1.5' fill='#3a9a50'/><circle cx='4' cy='11.8' r='1.5' fill='#3a9a50'/><path d='M8.5 5.5 L10 3 L11.5 5.5 Z M8.5 13 L10 10.5 L11.5 13 Z' fill='#4a80d0'/><rect x='8.8' y='6.8' width='2.5' height='2.5' fill='#e06060'/></svg>
<svg style='left:1331px;top:577px' width='18' height='17' viewBox='0 0 18 17'><path d='M6 1.5 L1.5 5.5 L6 9.5 V7 H12 V4 H6 Z' fill='#fff4c8' stroke='#c8901a' stroke-width='1.1' stroke-linejoin='round'/><path d='M11 7 V9.5 H4 V12.5 H11 V15 L15.5 11 Z' fill='#fff4c8' stroke='#c8901a' stroke-width='1.1' stroke-linejoin='round'/></svg>
<svg style='left:1374px;top:577px' width='12' height='17' viewBox='0 0 12 17'><rect x='1' y='1' width='3.5' height='3.5' fill='#f0b040' stroke='#8a7040' stroke-width='0.6'/><rect x='6.5' y='1' width='3.5' height='3.5' fill='#f0d090' stroke='#b09060' stroke-width='0.6'/><rect x='1' y='7' width='3.5' height='3.5' fill='#f0b040' stroke='#8a7040' stroke-width='0.6'/><rect x='6' y='6.5' width='7' height='9.5' rx='2' fill='#c8d8f0' stroke='#5a78b8' stroke-width='0.8'/></svg>
<span class='t' style='left:425px;top:5.58px;font-size:14.67px;line-height:14.67px;font-family:"Liberation Sans", sans-serif;color:#3c3c3c;letter-spacing:-0.116px;font-weight:700;'>TP1_Elie - TP1/Src/TP1_ex2_1.s - STM32CubeIDE</span>
<span class='t' style='left:5px;top:36.68px;font-size:14.67px;line-height:14.67px;font-family:"Liberation Sans", sans-serif;color:#3c3c3c;letter-spacing:0.372px;'>Window</span>
<span class='t' style='left:75.5px;top:36.68px;font-size:14.67px;line-height:14.67px;font-family:"Liberation Sans", sans-serif;color:#3c3c3c;letter-spacing:-0.052px;'>Help</span>
<span class='t' style='left:0px;top:164.58px;font-size:14.67px;line-height:14.67px;font-family:"Liberation Sans", sans-serif;color:#000;'>tion]</span>
<span class='t' style='left:68px;top:103.58px;font-size:14.67px;line-height:14.67px;font-family:"Liberation Sans", sans-serif;color:#000;letter-spacing:-0.588px;'>TP1_ex2_1.s</span>
<span class='t' style='left:198px;top:103.58px;font-size:14.67px;line-height:14.67px;font-family:"Liberation Sans", sans-serif;color:#3c3c3c;letter-spacing:0.421px;'>startup_stm32f446retx.s</span>
<span class='t' style='left:65.47px;top:130.97px;font-size:14.4px;line-height:14.4px;font-family:"Liberation Mono", monospace;color:#787878;letter-spacing:-0.6100000000000012px;'>2</span>
<span class='t' style='left:76.4px;top:130.97px;font-size:14.4px;line-height:14.4px;font-family:"Liberation Mono", monospace;color:#7f0055;letter-spacing:-0.6100000000000012px;font-weight:700;'>SUM:</span>
<span class='t' style='left:140.64px;top:130.97px;font-size:14.4px;line-height:14.4px;font-family:"Liberation Mono", monospace;color:#7f0055;letter-spacing:-0.6100000000000012px;font-weight:700;'>.byte</span>
<span class='t' style='left:188.82px;top:130.97px;font-size:14.4px;line-height:14.4px;font-family:"Liberation Mono", monospace;color:#000;letter-spacing:-0.6100000000000012px;'>1  </span>
<span class='t' style='left:212.91px;top:130.97px;font-size:14.4px;line-height:14.4px;font-family:"Liberation Mono", monospace;color:#3f7f5f;letter-spacing:-0.6100000000000012px;'>/*déclaration d&#x27;une variable SUM sur 8 bits initialisée à 1*/</span>
<span class='t' style='left:65.47px;top:147.97px;font-size:14.4px;line-height:14.4px;font-family:"Liberation Mono", monospace;color:#787878;letter-spacing:-0.6100000000000012px;'>3</span>
<span class='t' style='left:76.4px;top:147.97px;font-size:14.4px;line-height:14.4px;font-family:"Liberation Mono", monospace;color:#7f0055;letter-spacing:-0.6100000000000012px;font-weight:700;'>RES:</span>
<span class='t' style='left:140.64px;top:147.97px;font-size:14.4px;line-height:14.4px;font-family:"Liberation Mono", monospace;color:#7f0055;letter-spacing:-0.6100000000000012px;font-weight:700;'>.byte</span>
<span class='t' style='left:188.82px;top:147.97px;font-size:14.4px;line-height:14.4px;font-family:"Liberation Mono", monospace;color:#000;letter-spacing:-0.6100000000000012px;'>0</span>
<span class='t' style='left:65.47px;top:164.97px;font-size:14.4px;line-height:14.4px;font-family:"Liberation Mono", monospace;color:#787878;letter-spacing:-0.6100000000000012px;'>4</span>
<span class='t' style='left:76.4px;top:164.97px;font-size:14.4px;line-height:14.4px;font-family:"Liberation Mono", monospace;color:#7f0055;letter-spacing:-0.6100000000000012px;font-weight:700;'>tab:</span>
<span class='t' style='left:140.64px;top:164.97px;font-size:14.4px;line-height:14.4px;font-family:"Liberation Mono", monospace;color:#000;letter-spacing:-0.6100000000000012px;'>.skip 9 </span>
<span class='t' style='left:204.88px;top:164.97px;font-size:14.4px;line-height:14.4px;font-family:"Liberation Mono", monospace;color:#3f7f5f;letter-spacing:-0.6100000000000012px;'>/*déclaration d&#x27;un tableau tab vide de 9 octets */</span>
<span class='t' style='left:65.47px;top:181.97px;font-size:14.4px;line-height:14.4px;font-family:"Liberation Mono", monospace;color:#787878;letter-spacing:-0.6100000000000012px;'>5</span>
<span class='t' style='left:65.47px;top:198.97px;font-size:14.4px;line-height:14.4px;font-family:"Liberation Mono", monospace;color:#787878;letter-spacing:-0.6100000000000012px;'>6</span>
<span class='t' style='left:76.4px;top:198.97px;font-size:14.4px;line-height:14.4px;font-family:"Liberation Mono", monospace;color:#7f0055;letter-spacing:-0.6100000000000012px;font-weight:700;'>.text</span>
<span class='t' style='left:65.47px;top:215.97px;font-size:14.4px;line-height:14.4px;font-family:"Liberation Mono", monospace;color:#787878;letter-spacing:-0.6100000000000012px;'>7</span>
<span class='t' style='left:76.4px;top:215.97px;font-size:14.4px;line-height:14.4px;font-family:"Liberation Mono", monospace;color:#7f0055;letter-spacing:-0.6100000000000012px;font-weight:700;'>.global</span>
<span class='t' style='left:140.64px;top:215.97px;font-size:14.4px;line-height:14.4px;font-family:"Liberation Mono", monospace;color:#000;letter-spacing:-0.6100000000000012px;'>main</span>
<span class='t' style='left:65.47px;top:232.97px;font-size:14.4px;line-height:14.4px;font-family:"Liberation Mono", monospace;color:#787878;letter-spacing:-0.6100000000000012px;'>8</span>
<span class='t' style='left:76.4px;top:232.97px;font-size:14.4px;line-height:14.4px;font-family:"Liberation Mono", monospace;color:#7f0055;letter-spacing:-0.6100000000000012px;font-weight:700;'>.type</span>
<span class='t' style='left:124.58px;top:232.97px;font-size:14.4px;line-height:14.4px;font-family:"Liberation Mono", monospace;color:#000;letter-spacing:-0.6100000000000012px;'>main, </span>
<span class='t' style='left:172.76px;top:232.97px;font-size:14.4px;line-height:14.4px;font-family:"Liberation Mono", monospace;color:#7f0055;letter-spacing:-0.6100000000000012px;font-weight:700;'>%function</span>
<span class='t' style='left:65.47px;top:249.97px;font-size:14.4px;line-height:14.4px;font-family:"Liberation Mono", monospace;color:#787878;letter-spacing:-0.6100000000000012px;'>9</span>
<span class='t' style='left:57.44px;top:266.97px;font-size:14.4px;line-height:14.4px;font-family:"Liberation Mono", monospace;color:#787878;letter-spacing:-0.6100000000000012px;'>10</span>
<span class='t' style='left:76.4px;top:266.97px;font-size:14.4px;line-height:14.4px;font-family:"Liberation Mono", monospace;color:#7f0055;letter-spacing:-0.6100000000000012px;font-weight:700;'>main:</span>
<span class='t' style='left:57.44px;top:283.97px;font-size:14.4px;line-height:14.4px;font-family:"Liberation Mono", monospace;color:#787878;letter-spacing:-0.6100000000000012px;'>11</span>
<span class='t' style='left:140.64px;top:283.97px;font-size:14.4px;line-height:14.4px;font-family:"Liberation Mono", monospace;color:#3f7f5f;letter-spacing:-0.6100000000000012px;'>/*Solution sans boucle*/</span>
<span class='t' style='left:57.44px;top:300.97px;font-size:14.4px;line-height:14.4px;font-family:"Liberation Mono", monospace;color:#787878;letter-spacing:-0.6100000000000012px;'>12</span>
<span class='t' style='left:140.64px;top:300.97px;font-size:14.4px;line-height:14.4px;font-family:"Liberation Mono", monospace;color:#000;letter-spacing:-0.6100000000000012px;'>MOV R0, #1 </span>
<span class='t' style='left:228.97px;top:300.97px;font-size:14.4px;line-height:14.4px;font-family:"Liberation Mono", monospace;color:#3f7f5f;letter-spacing:-0.6100000000000012px;'>/*R0=reg de valeur*/</span>
<span class='t' style='left:57.44px;top:317.97px;font-size:14.4px;line-height:14.4px;font-family:"Liberation Mono", monospace;color:#787878;letter-spacing:-0.6100000000000012px;'>13</span>
<span class='t' style='left:140.64px;top:317.97px;font-size:14.4px;line-height:14.4px;font-family:"Liberation Mono", monospace;color:#000;letter-spacing:-0.6100000000000012px;'>LDR R1, =tab </span>
<span class='t' style='left:245.03px;top:317.97px;font-size:14.4px;line-height:14.4px;font-family:"Liberation Mono", monospace;color:#3f7f5f;letter-spacing:-0.6100000000000012px;'>/*@tab dans R1*/</span>
<span class='t' style='left:57.44px;top:334.97px;font-size:14.4px;line-height:14.4px;font-family:"Liberation Mono", monospace;color:#787878;letter-spacing:-0.6100000000000012px;'>14</span>
<span class='t' style='left:140.64px;top:334.97px;font-size:14.4px;line-height:14.4px;font-family:"Liberation Mono", monospace;color:#000;letter-spacing:-0.6100000000000012px;'>MOV R2, #0  </span>
<span class='t' style='left:237.0px;top:334.97px;font-size:14.4px;line-height:14.4px;font-family:"Liberation Mono", monospace;color:#3f7f5f;letter-spacing:-0.6100000000000012px;'>/*R2 est utilisé comme index de boucle */</span>
<span class='t' style='left:57.44px;top:351.97px;font-size:14.4px;line-height:14.4px;font-family:"Liberation Mono", monospace;color:#787878;letter-spacing:-0.6100000000000012px;'>15</span>
<span class='t' style='left:76.4px;top:351.97px;font-size:14.4px;line-height:14.4px;font-family:"Liberation Mono", monospace;color:#7f0055;letter-spacing:-0.6100000000000012px;font-weight:700;'>boucle:</span>
<span class='t' style='left:140.64px;top:351.97px;font-size:14.4px;line-height:14.4px;font-family:"Liberation Mono", monospace;color:#000;letter-spacing:-0.6100000000000012px;'>STR R0,[R1,R2] </span>
<span class='t' style='left:261.09000000000003px;top:351.97px;font-size:14.4px;line-height:14.4px;font-family:"Liberation Mono", monospace;color:#3f7f5f;letter-spacing:-0.6100000000000012px;'>/* LDRB=Load 8bits de données*/</span>
<span class='t' style='left:57.44px;top:368.97px;font-size:14.4px;line-height:14.4px;font-family:"Liberation Mono", monospace;color:#787878;letter-spacing:-0.6100000000000012px;'>16</span>
<span class='t' style='left:140.64px;top:368.97px;font-size:14.4px;line-height:14.4px;font-family:"Liberation Mono", monospace;color:#000;letter-spacing:-0.6100000000000012px;'>ADD R0,R0,#1 </span>
<span class='t' style='left:245.03px;top:368.97px;font-size:14.4px;line-height:14.4px;font-family:"Liberation Mono", monospace;color:#3f7f5f;letter-spacing:-0.6100000000000012px;'>/*incrémente valeur de  reg*/</span>
<span class='t' style='left:57.44px;top:385.97px;font-size:14.4px;line-height:14.4px;font-family:"Liberation Mono", monospace;color:#787878;letter-spacing:-0.6100000000000012px;'>17</span>
<span class='t' style='left:140.64px;top:385.97px;font-size:14.4px;line-height:14.4px;font-family:"Liberation Mono", monospace;color:#000;letter-spacing:-0.6100000000000012px;'>ADD R2,R2,#1 </span>
<span class='t' style='left:245.03px;top:385.97px;font-size:14.4px;line-height:14.4px;font-family:"Liberation Mono", monospace;color:#3f7f5f;letter-spacing:-0.6100000000000012px;'>/*incrémente index*/</span>
<span class='t' style='left:57.44px;top:402.97px;font-size:14.4px;line-height:14.4px;font-family:"Liberation Mono", monospace;color:#787878;letter-spacing:-0.6100000000000012px;'>18</span>
<span class='t' style='left:140.64px;top:402.97px;font-size:14.4px;line-height:14.4px;font-family:"Liberation Mono", monospace;color:#000;letter-spacing:-0.6100000000000012px;'>CMP R2, #9</span>
<span class='t' style='left:57.44px;top:419.97px;font-size:14.4px;line-height:14.4px;font-family:"Liberation Mono", monospace;color:#787878;letter-spacing:-0.6100000000000012px;'>19</span>
<span class='t' style='left:140.64px;top:419.97px;font-size:14.4px;line-height:14.4px;font-family:"Liberation Mono", monospace;color:#000;letter-spacing:-0.6100000000000012px;'>BLT  boucle </span>
<span class='t' style='left:237.0px;top:419.97px;font-size:14.4px;line-height:14.4px;font-family:"Liberation Mono", monospace;color:#3f7f5f;letter-spacing:-0.6100000000000012px;'>/*branchement au label loop si R2&lt;9*/</span>
<span class='t' style='left:57.44px;top:436.97px;font-size:14.4px;line-height:14.4px;font-family:"Liberation Mono", monospace;color:#787878;letter-spacing:-0.6100000000000012px;'>20</span>
<span class='t' style='left:57.44px;top:453.97px;font-size:14.4px;line-height:14.4px;font-family:"Liberation Mono", monospace;color:#787878;letter-spacing:-0.6100000000000012px;'>21</span>
<span class='t' style='left:76.4px;top:453.97px;font-size:14.4px;line-height:14.4px;font-family:"Liberation Mono", monospace;color:#7f0055;letter-spacing:-0.6100000000000012px;font-weight:700;'>stop:</span>
<span class='t' style='left:140.64px;top:453.97px;font-size:14.4px;line-height:14.4px;font-family:"Liberation Mono", monospace;color:#000;letter-spacing:-0.6100000000000012px;'>B stop</span>
<span class='t' style='left:57.44px;top:470.97px;font-size:14.4px;line-height:14.4px;font-family:"Liberation Mono", monospace;color:#787878;letter-spacing:-0.6100000000000012px;'>22</span>
<span class='t' style='left:140.64px;top:470.97px;font-size:14.4px;line-height:14.4px;font-family:"Liberation Mono", monospace;color:#000;letter-spacing:-0.6100000000000012px;'>BX LR</span>
<span class='t' style='left:57.44px;top:487.97px;font-size:14.4px;line-height:14.4px;font-family:"Liberation Mono", monospace;color:#787878;letter-spacing:-0.6100000000000012px;'>23</span>
<span class='t' style='left:76.4px;top:487.97px;font-size:14.4px;line-height:14.4px;font-family:"Liberation Mono", monospace;color:#000;letter-spacing:-0.6100000000000012px;'>.end</span>
<span class='t' style='left:57.44px;top:504.97px;font-size:14.4px;line-height:14.4px;font-family:"Liberation Mono", monospace;color:#787878;letter-spacing:-0.6100000000000012px;'>24</span>
<span class='t' style='left:57.44px;top:521.97px;font-size:14.4px;line-height:14.4px;font-family:"Liberation Mono", monospace;color:#787878;letter-spacing:-0.6100000000000012px;'>25</span>
<span class='t' style='left:57.44px;top:538.97px;font-size:14.4px;line-height:14.4px;font-family:"Liberation Mono", monospace;color:#787878;letter-spacing:-0.6100000000000012px;'>26</span>
<span class='t' style='left:833px;top:103.58px;font-size:14.67px;line-height:14.67px;font-family:"Liberation Sans", sans-serif;color:#3c3c3c;letter-spacing:0.576px;'>Variabl</span>
<span class='t' style='left:912px;top:103.58px;font-size:14.67px;line-height:14.67px;font-family:"Liberation Sans", sans-serif;color:#3c3c3c;letter-spacing:0.109px;'>Breakp</span>
<span class='t' style='left:990px;top:103.58px;font-size:14.67px;line-height:14.67px;font-family:"Liberation Sans", sans-serif;color:#3c3c3c;letter-spacing:-0.125px;'>Expres</span>
<span class='t' style='left:1067.5px;top:103.58px;font-size:14.67px;line-height:14.67px;font-family:"Liberation Sans", sans-serif;color:#3c3c3c;letter-spacing:0.484px;'>Module</span>
<span class='t' style='left:1150px;top:103.58px;font-size:14.67px;line-height:14.67px;font-family:"Liberation Sans", sans-serif;color:#3c3c3c;letter-spacing:-0.597px;'>Disass</span>
<span class='t' style='left:1229px;top:103.58px;font-size:14.67px;line-height:14.67px;font-family:"Liberation Sans", sans-serif;color:#3c3c3c;letter-spacing:-0.109px;'>Regist</span>
<span class='t' style='left:1306px;top:103.58px;font-size:14.67px;line-height:14.67px;font-family:"Liberation Sans", sans-serif;color:#000;letter-spacing:-0.344px;'>Live Ex</span>
<span class='t' style='left:821px;top:169.58px;font-size:14.67px;line-height:14.67px;font-family:"Liberation Sans", sans-serif;color:#9d9d9d;letter-spacing:-0.335px;font-weight:700;'>Expression</span>
<span class='t' style='left:1070.5px;top:169.58px;font-size:14.67px;line-height:14.67px;font-family:"Liberation Sans", sans-serif;color:#9d9d9d;letter-spacing:-0.042px;font-weight:700;'>Type</span>
<span class='t' style='left:1270px;top:169.58px;font-size:14.67px;line-height:14.67px;font-family:"Liberation Sans", sans-serif;color:#9d9d9d;letter-spacing:0.426px;font-weight:700;'>Value</span>
<span class='t' style='left:850px;top:198.08px;font-size:14.67px;line-height:14.67px;font-family:"Liberation Sans", sans-serif;color:#000;letter-spacing:-0.786px;'>&amp;SUM</span>
<span class='t' style='left:1066.5px;top:198.08px;font-size:14.67px;line-height:14.67px;font-family:"Liberation Sans", sans-serif;color:#000;letter-spacing:0.198px;width:192.5px;overflow:hidden;'>&lt;data variable, no debug info</span>
<span class='t' style='left:1267px;top:198.08px;font-size:14.67px;line-height:14.67px;font-family:"Liberation Sans", sans-serif;color:#000;letter-spacing:-0.334px;'>0x20000000</span>
<span class='t' style='left:850px;top:221.08px;font-size:14.67px;line-height:14.67px;font-family:"Liberation Sans", sans-serif;color:#fff;letter-spacing:0.448px;'>&amp;tab</span>
<span class='t' style='left:1066.5px;top:221.08px;font-size:14.67px;line-height:14.67px;font-family:"Liberation Sans", sans-serif;color:#fff;letter-spacing:0.198px;width:192.5px;overflow:hidden;'>&lt;data variable, no debug info</span>
<span class='t' style='left:1267px;top:221.08px;font-size:14.67px;line-height:14.67px;font-family:"Liberation Sans", sans-serif;color:#fff;letter-spacing:-0.334px;'>0x20000002</span>
<span class='t' style='left:850px;top:244.08px;font-size:14.67px;line-height:14.67px;font-family:"Liberation Sans", sans-serif;color:#000;letter-spacing:-1.874px;'>&amp;RES</span>
<span class='t' style='left:1066.5px;top:244.08px;font-size:14.67px;line-height:14.67px;font-family:"Liberation Sans", sans-serif;color:#000;letter-spacing:0.198px;width:192.5px;overflow:hidden;'>&lt;data variable, no debug info</span>
<span class='t' style='left:1267px;top:244.08px;font-size:14.67px;line-height:14.67px;font-family:"Liberation Sans", sans-serif;color:#000;letter-spacing:-0.334px;'>0x20000001</span>
<span class='t' style='left:850px;top:267.08px;font-size:14.67px;line-height:14.67px;font-family:"Liberation Sans", sans-serif;color:#000;letter-spacing:-0.703px;'>&amp;VALEUR_SUP30</span>
<span class='t' style='left:1267px;top:267.08px;font-size:14.67px;line-height:14.67px;font-family:"Liberation Sans", sans-serif;color:#000;letter-spacing:0.076px;'>Failed to evaluate</span>
<span class='t' style='left:850px;top:290.08px;font-size:14.67px;line-height:14.67px;font-family:"Liberation Sans", sans-serif;color:#000;letter-spacing:-0.294px;font-style:italic;'>Add new expression</span>
<span class='t' style='left:68.5px;top:578.58px;font-size:14.67px;line-height:14.67px;font-family:"Liberation Sans", sans-serif;color:#3c3c3c;letter-spacing:-0.130px;'>Console</span>
<span class='t' style='left:151.5px;top:578.58px;font-size:14.67px;line-height:14.67px;font-family:"Liberation Sans", sans-serif;color:#3c3c3c;letter-spacing:0.228px;'>Problems</span>
<span class='t' style='left:245.5px;top:578.58px;font-size:14.67px;line-height:14.67px;font-family:"Liberation Sans", sans-serif;color:#3c3c3c;letter-spacing:-0.034px;'>Executables</span>
<span class='t' style='left:355.5px;top:578.58px;font-size:14.67px;line-height:14.67px;font-family:"Liberation Sans", sans-serif;color:#3c3c3c;letter-spacing:-0.081px;'>Debugger Console</span>
<span class='t' style='left:506.5px;top:578.58px;font-size:14.67px;line-height:14.67px;font-family:"Liberation Sans", sans-serif;color:#000;letter-spacing:0.512px;'>Memory</span>
<span class='t' style='left:46.5px;top:605.58px;font-size:14.67px;line-height:14.67px;font-family:"Liberation Sans", sans-serif;color:#3c3c3c;letter-spacing:0.614px;'>Monitors</span>
<span class='t' style='left:87.5px;top:641.58px;font-size:14.67px;line-height:14.67px;font-family:"Liberation Sans", sans-serif;color:#000;letter-spacing:-0.300px;'>0x20000000</span>
<span class='t' style='left:87.5px;top:664.58px;font-size:14.67px;line-height:14.67px;font-family:"Liberation Sans", sans-serif;color:#fff;letter-spacing:-0.300px;'>0x20000002</span>
<span class='t' style='left:87.5px;top:687.58px;font-size:14.67px;line-height:14.67px;font-family:"Liberation Sans", sans-serif;color:#000;letter-spacing:-0.300px;'>0x20000001</span>
<span class='t' style='left:87.5px;top:710.58px;font-size:14.67px;line-height:14.67px;font-family:"Liberation Sans", sans-serif;color:#000;letter-spacing:-0.300px;'>0x20000018</span>
<span class='t' style='left:87.5px;top:733.58px;font-size:14.67px;line-height:14.67px;font-family:"Liberation Sans", sans-serif;color:#000;letter-spacing:-0.300px;'>0x20000007</span>
<span class='t' style='left:452.5px;top:608.58px;font-size:14.67px;line-height:14.67px;font-family:"Liberation Sans", sans-serif;color:#000;letter-spacing:-0.352px;'>0x20000002 : 0x20000002 &lt;Hex&gt;</span>
<span class='t' style='left:727px;top:608.58px;font-size:14.67px;line-height:14.67px;font-family:"Liberation Sans", sans-serif;color:#3c3c3c;letter-spacing:-0.099px;'>New Renderings...</span>
<span class='t' style='left:458.5px;top:635.97px;font-size:14.4px;line-height:14.4px;font-family:"Liberation Mono", monospace;color:#a0a0a0;letter-spacing:-0.6100000000000012px;'>Address</span>
<span class='t' style='left:538.5px;top:635.97px;font-size:14.4px;line-height:14.4px;font-family:"Liberation Mono", monospace;color:#a0a0a0;letter-spacing:-0.6100000000000012px;'>0 - 3</span>
<span class='t' style='left:618.5px;top:635.97px;font-size:14.4px;line-height:14.4px;font-family:"Liberation Mono", monospace;color:#a0a0a0;letter-spacing:-0.6100000000000012px;'>4 - 7</span>
<span class='t' style='left:698.5px;top:635.97px;font-size:14.4px;line-height:14.4px;font-family:"Liberation Mono", monospace;color:#a0a0a0;letter-spacing:-0.6100000000000012px;'>8 - B</span>
<span class='t' style='left:778.5px;top:635.97px;font-size:14.4px;line-height:14.4px;font-family:"Liberation Mono", monospace;color:#a0a0a0;letter-spacing:-0.6100000000000012px;'>C - F</span>
<span class='t' style='left:461.5px;top:664.47px;font-size:14.4px;line-height:14.4px;font-family:"Liberation Mono", monospace;color:#fff;letter-spacing:-0.6100000000000012px;'>20000000</span>
<span class='t' style='left:545px;top:664.47px;font-size:14.4px;line-height:14.4px;font-family:"Liberation Mono", monospace;color:#fff;letter-spacing:-0.6100000000000012px;'>01000102</span>
<span class='t' style='left:621.5px;top:664.47px;font-size:14.4px;line-height:14.4px;font-family:"Liberation Mono", monospace;color:#fff;letter-spacing:-0.6100000000000012px;'>03040506</span>
<span class='t' style='left:701.5px;top:664.47px;font-size:14.4px;line-height:14.4px;font-family:"Liberation Mono", monospace;color:#fff;letter-spacing:-0.6100000000000012px;'>07080900</span>
<span class='t' style='left:781.5px;top:664.47px;font-size:14.4px;line-height:14.4px;font-family:"Liberation Mono", monospace;color:#fff;letter-spacing:-0.6100000000000012px;'>00000000</span>
<span class='t' style='left:461.5px;top:687.47px;font-size:14.4px;line-height:14.4px;font-family:"Liberation Mono", monospace;color:#000;letter-spacing:-0.6100000000000012px;'>20000010</span>
<span class='t' style='left:541.5px;top:687.47px;font-size:14.4px;line-height:14.4px;font-family:"Liberation Mono", monospace;color:#000;letter-spacing:-0.6100000000000012px;'>00000000</span>
<span class='t' style='left:621.5px;top:687.47px;font-size:14.4px;line-height:14.4px;font-family:"Liberation Mono", monospace;color:#000;letter-spacing:-0.6100000000000012px;'>00000000</span>
<span class='t' style='left:701.5px;top:687.47px;font-size:14.4px;line-height:14.4px;font-family:"Liberation Mono", monospace;color:#000;letter-spacing:-0.6100000000000012px;'>00000000</span>
<span class='t' style='left:781.5px;top:687.47px;font-size:14.4px;line-height:14.4px;font-family:"Liberation Mono", monospace;color:#000;letter-spacing:-0.6100000000000012px;'>00000000</span>
<span class='t' style='left:461.5px;top:710.47px;font-size:14.4px;line-height:14.4px;font-family:"Liberation Mono", monospace;color:#000;letter-spacing:-0.6100000000000012px;'>20000020</span>
<span class='t' style='left:541.5px;top:710.47px;font-size:14.4px;line-height:14.4px;font-family:"Liberation Mono", monospace;color:#000;letter-spacing:-0.6100000000000012px;'>00000000</span>
<span class='t' style='left:621.5px;top:710.47px;font-size:14.4px;line-height:14.4px;font-family:"Liberation Mono", monospace;color:#000;letter-spacing:-0.6100000000000012px;'>00000000</span>
<span class='t' style='left:701.5px;top:710.47px;font-size:14.4px;line-height:14.4px;font-family:"Liberation Mono", monospace;color:#000;letter-spacing:-0.6100000000000012px;'>40F6FF71</span>
<span class='t' style='left:781.5px;top:710.47px;font-size:14.4px;line-height:14.4px;font-family:"Liberation Mono", monospace;color:#000;letter-spacing:-0.6100000000000012px;'>81600120</span>
<span class='t' style='left:461.5px;top:733.47px;font-size:14.4px;line-height:14.4px;font-family:"Liberation Mono", monospace;color:#000;letter-spacing:-0.6100000000000012px;'>20000030</span>
<span class='t' style='left:541.5px;top:733.47px;font-size:14.4px;line-height:14.4px;font-family:"Liberation Mono", monospace;color:#000;letter-spacing:-0.6100000000000012px;'>02BD2DE9</span>
<span class='t' style='left:621.5px;top:733.47px;font-size:14.4px;line-height:14.4px;font-family:"Liberation Mono", monospace;color:#000;letter-spacing:-0.6100000000000012px;'>F0418046</span>
<span class='t' style='left:701.5px;top:733.47px;font-size:14.4px;line-height:14.4px;font-family:"Liberation Mono", monospace;color:#000;letter-spacing:-0.6100000000000012px;'>0D461646</span>
<span class='t' style='left:781.5px;top:733.47px;font-size:14.4px;line-height:14.4px;font-family:"Liberation Mono", monospace;color:#000;letter-spacing:-0.6100000000000012px;'>1F460024</span>
<span class='t' style='left:461.5px;top:756.47px;font-size:14.4px;line-height:14.4px;font-family:"Liberation Mono", monospace;color:#000;letter-spacing:-0.6100000000000012px;'>20000040</span>
<span class='t' style='left:541.5px;top:756.47px;font-size:14.4px;line-height:14.4px;font-family:"Liberation Mono", monospace;color:#000;letter-spacing:-0.6100000000000012px;'>37B1022E</span>
<span class='t' style='left:621.5px;top:756.47px;font-size:14.4px;line-height:14.4px;font-family:"Liberation Mono", monospace;color:#000;letter-spacing:-0.6100000000000012px;'>08D005D3</span>
<span class='t' style='left:701.5px;top:756.47px;font-size:14.4px;line-height:14.4px;font-family:"Liberation Mono", monospace;color:#000;letter-spacing:-0.6100000000000012px;'>032E08BF</span>
<span class='t' style='left:781.5px;top:756.47px;font-size:14.4px;line-height:14.4px;font-family:"Liberation Mono", monospace;color:#000;letter-spacing:-0.6100000000000012px;'>082408E0</span>
</body></html>
